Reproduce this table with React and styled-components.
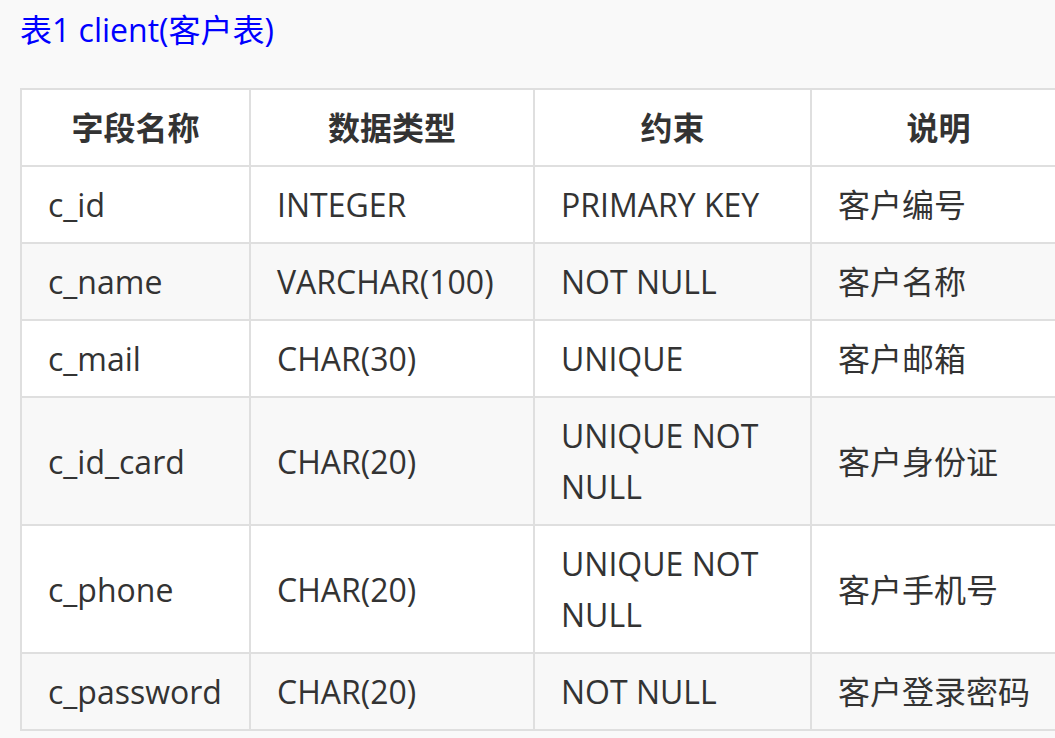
import React from 'react';
import styled, { createGlobalStyle } from 'styled-components';

const GlobalStyle = createGlobalStyle`
  html, body {
    margin: 0;
    padding: 0;
    background: #f9f9f9;
    overflow: hidden;
  }
  body {
    font-family: "Open Sans", "Noto Sans CJK SC", sans-serif;
    color: #333;
  }
`;

const Page = styled.div`
  padding: 9px 0 0 20px;
  width: 1100px;
`;

const Caption = styled.div`
  font-size: 32px;
  line-height: 42px;
  color: #0000ff;
  margin-bottom: 37px;
`;

const Table = styled.table`
  border-collapse: collapse;
  table-layout: fixed;
  width: 1045px;
  font-size: 32px;
  line-height: 51px;
`;

const Head = styled.th`
  background: #fff;
  border: 2px solid #dfdfdf;
  padding: 12px 26px;
  font-weight: 700;
  text-align: center;
  color: #333;
`;

const Row = styled.tr`
  background: ${({ $alt }) => ($alt ? '#f8f8f8' : '#fff')};
`;

const Cell = styled.td`
  border: 2px solid #dfdfdf;
  padding: 12px 26px;
  text-align: left;
  vertical-align: middle;
  color: #333;
`;

const columns = [
  { title: '字段名称', width: 229 },
  { title: '数据类型', width: 284 },
  { title: '约束', width: 277 },
  { title: '说明', width: 255 },
];

const rows = [
  ['c_id', 'INTEGER', 'PRIMARY KEY', '客户编号'],
  ['c_name', 'VARCHAR(100)', 'NOT NULL', '客户名称'],
  ['c_mail', 'CHAR(30)', 'UNIQUE', '客户邮箱'],
  ['c_id_card', 'CHAR(20)', 'UNIQUE NOT NULL', '客户身份证'],
  ['c_phone', 'CHAR(20)', 'UNIQUE NOT NULL', '客户手机号'],
  ['c_password', 'CHAR(20)', 'NOT NULL', '客户登录密码'],
];

export default function App() {
  return (
    <>
      <GlobalStyle />
      <Page>
        <Caption>表1 client(客户表)</Caption>
        <Table>
          <colgroup>
            {columns.map((c) => (
              <col key={c.title} style={{ width: c.width }} />
            ))}
          </colgroup>
          <thead>
            <tr>
              {columns.map((c) => (
                <Head key={c.title}>{c.title}</Head>
              ))}
            </tr>
          </thead>
          <tbody>
            {rows.map((r, i) => (
              <Row key={r[0]} $alt={i % 2 === 1}>
                {r.map((v, j) => (
                  <Cell key={j}>{v}</Cell>
                ))}
              </Row>
            ))}
          </tbody>
        </Table>
      </Page>
    </>
  );
}
